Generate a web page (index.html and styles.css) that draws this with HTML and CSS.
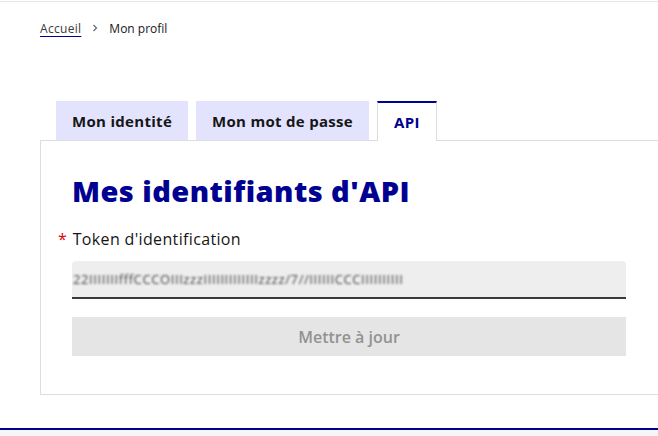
FILE: index.html
```html
<!DOCTYPE html>
<html lang="fr">
<head>
<meta charset="utf-8">
<title>Mon profil</title>
<link rel="stylesheet" href="styles.css">
</head>
<body>
<div class="topline"></div>
<nav class="breadcrumb">
  <a href="#" class="crumb-link">Accueil</a>
  <svg class="chev" width="8" height="8" viewBox="0 0 8 8"><path d="M2.5 1 L5.5 4 L2.5 7" fill="none" stroke="#666" stroke-width="1.2"/></svg>
  <span class="crumb-current">Mon profil</span>
</nav>
<main class="main">
  <ul class="tabs">
    <li class="tab">Mon identité</li>
    <li class="tab">Mon mot de passe</li>
    <li class="tab tab-active">API</li>
  </ul>
  <section class="panel">
    <h1 class="title">Mes identifiants d'API</h1>
    <label class="label"><span class="req">*</span> Token d'identification</label>
    <div class="input"><span class="token">22IIIIIIIfffCCCOIIIzzzIIIIIIIIIIIIIzzzz/7//IIIIIICCCIIIIIIIIII</span></div>
    <button class="btn" disabled>Mettre à jour</button>
  </section>
</main>
<footer class="footer"></footer>
</body>
</html>
```
FILE: styles.css
```css
html, body {
  margin: 0;
  padding: 0;
  background: #fff;
  overflow: hidden;
  font-family: "Open Sans", "Noto Sans", sans-serif;
  color: #161616;
}
.topline {
  height: 1px;
  margin-top: 1px;
  background: #e6e6e6;
}
.breadcrumb {
  display: flex;
  align-items: center;
  height: 24px;
  margin-top: 14px;
  padding-left: 40px;
  font-size: 12px;
  gap: 8px;
}
.crumb-link {
  color: #3a3a3a;
  text-decoration: underline;
  text-decoration-color: #000091;
  text-underline-offset: 3px;
  letter-spacing: 0.3px;
}
.chev { margin: 0 2px; }
.crumb-current { color: #161616; }
.main {
  margin-top: 61px;
  padding-left: 40px;
}
.tabs {
  list-style: none;
  margin: 0;
  padding: 0 0 0 16px;
  display: flex;
  gap: 8px;
  position: relative;
  z-index: 1;
}
.tab {
  height: 39px;
  box-sizing: border-box;
  padding: 0 16px;
  display: flex;
  align-items: center;
  background: #e3e3fd;
  font-weight: 700;
  font-size: 15px;
  letter-spacing: 0.3px;
  color: #161616;
}
.tab-active {
  background: #fff;
  color: #000091;
  border-top: 2px solid #000091;
  border-left: 1px solid #dddddd;
  border-right: 1px solid #dddddd;
  height: 40px;
  margin-bottom: -1px;
  padding: 0 16px;
}
.panel {
  width: 640px;
  box-sizing: border-box;
  border: 1px solid #dddddd;
  padding: 32px 53px 38px 31px;
}
.title {
  margin: 0;
  font-size: 29px;
  line-height: 36px;
  font-weight: 800;
  letter-spacing: 0.45px;
  color: #000091;
}
.label {
  display: block;
  margin-top: 18px;
  margin-left: -14px;
  font-size: 16px;
  letter-spacing: 0.35px;
  line-height: 24px;
}
.req { color: #e1000f; margin-right: 1px; }
.input {
  margin-top: 10px;
  height: 38px;
  box-sizing: border-box;
  background: #eeeeee;
  border-radius: 4px 4px 0 0;
  border-bottom: 2px solid #3a3a3a;
  display: flex;
  align-items: center;
  padding-left: 1px;
  overflow: hidden;
}
.token {
  font-size: 13px;
  letter-spacing: 0.6px;
  color: #444;
  filter: blur(1px);
  white-space: nowrap;
}
.btn {
  display: block;
  width: 100%;
  margin-top: 18px;
  height: 39px;
  border: none;
  background: #e5e5e5;
  color: #929292;
  font-family: inherit;
  font-size: 16px;
  font-weight: 600;
}
.footer {
  margin-top: 33px;
  height: 20px;
  border-top: 2px solid #000091;
  background: #f6f6f6;
}
```
